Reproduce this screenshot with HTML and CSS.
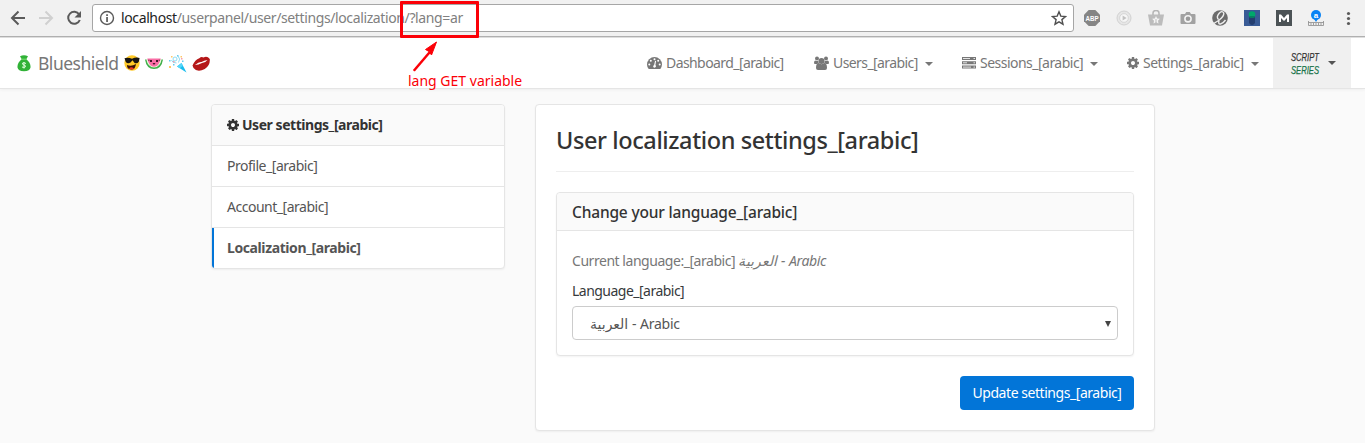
FILE: index.html
```html
<!DOCTYPE html>
<html lang="en">
<head>
<meta charset="utf-8">
<title>User localization settings</title>
<link rel="stylesheet" href="styles.css">
</head>
<body>
<svg class="defs" width="0" height="0">
  <symbol id="cog" viewBox="0 128 1536 1536"><path d="M1024 896q0-106-75-181t-181-75-181 75-75 181 75 181 181 75 181-75 75-181zm512-109v222q0 12-8 23t-20 13l-185 28q-19 54-39 91 35 50 107 138 10 12 10 25t-9 23q-27 37-99 108t-94 71q-12 0-26-9l-138-108q-44 23-91 38-16 136-29 186-7 28-36 28h-222q-14 0-24.500-8.500t-11.500-21.500l-28-184q-49-16-90-37l-141 107q-10 9-25 9-14 0-25-11-126-114-165-168-7-10-7-23 0-12 8-23 15-21 51-66.500t54-70.500q-27-50-41-99l-183-27q-13-2-21-12.500t-8-23.500v-222q0-12 8-23t19-13l186-28q14-46 39-92-40-57-107-138-10-12-10-24 0-10 9-23 26-36 98.500-107.500t94.500-71.500q13 0 26 10l138 107q44-23 91-38 16-136 29-186 7-28 36-28h222q14 0 24.500 8.500t11.500 21.500l28 184q49 16 90 37l142-107q9-9 24-9 13 0 25 10 129 119 165 170 7 8 7 22 0 12-8 23-15 21-51 66.500t-54 70.500q26 50 41 98l183 28q13 2 21 12.500t8 23.500z"/></symbol>
</svg>

<header class="browser">
  <svg class="browser-nav" width="92" height="36" viewBox="0 0 92 36" fill="none" stroke-width="2">
    <path d="M25 18H12.500M18.500 11.500L12 18l6.500 6.500" stroke="#5a5a5a"/>
    <path d="M39 18h12.500M45.500 11.500L52 18l-6.500 6.500" stroke="#d0d0d0"/>
    <path d="M79.200 14.500A6 6 0 1 0 79.800 20" stroke="#5a5a5a"/>
    <path d="M81 11v6.500h-6.500z" fill="#5a5a5a"/>
  </svg>
  <div class="address">
    <svg width="16" height="16" viewBox="0 0 16 16"><circle cx="8" cy="8" r="6.500" fill="none" stroke="#5a5a5a" stroke-width="1.400"/><path d="M7.200 4.200h1.700v1.700H7.200zM7.200 7h1.700v5H7.200z" fill="#5a5a5a"/></svg>
    <span class="url"><b>localhost</b>/userpanel/user/settings/localization/?lang=ar</span>
    <svg class="star" width="16" height="16" viewBox="0 0 16 16"><path d="M8 1.800l1.800 4.300 4.700.4-3.600 3.100 1.100 4.600L8 11.800l-4 2.400 1.100-4.600-3.600-3.100 4.700-.4z" fill="none" stroke="#505050" stroke-width="1.400"/></svg>
  </div>
  <div class="extensions">
    <svg class="loose" width="16" height="16" viewBox="0 0 16 16"><path d="M4.700 0h6.600L16 4.700v6.600L11.300 16H4.700L0 11.300V4.700z" fill="#858585"/><text x="1.500" y="10.900" class="abp" textLength="13" lengthAdjust="spacingAndGlyphs">ABP</text></svg>
    <svg width="16" height="16" viewBox="0 0 16 16"><circle cx="8" cy="8" r="7" fill="#e6e6e6" stroke="#d2d2d2"/><circle cx="8" cy="8" r="4.300" fill="#f6f6f6" stroke="#ccc" stroke-width=".7"/><path d="M6.600 5.500v5l4-2.500z" fill="#c2c2c2"/></svg>
    <svg width="16" height="16" viewBox="0 0 16 16"><path d="M0 4.500h16L14 15.500H2z" fill="#bcbcbc"/><path d="M5 5V3q0-2.500 3-2.500T11 3v2" fill="none" stroke="#b5b5b5" stroke-width="1.500"/><path d="M8 6l1.200 2.500 2.700.3-1.900 1.900.5 2.800L8 12.200l-2.500 1.300.5-2.800-1.900-1.900 2.700-.3z" fill="#f4f4f4"/><path d="M8 9v4" stroke="#bcbcbc"/></svg>
    <svg width="16" height="16" viewBox="0 0 16 16"><path d="M1.500 4H5l1.200-2h3.600L11 4h3.500q1 0 1 1v8q0 1-1 1h-13q-1 0-1-1V5q0-1 1-1z" fill="#a2a2a2"/><circle cx="8" cy="8.800" r="3.100" fill="#999" stroke="#f3f3f3" stroke-width="1.600"/></svg>
    <svg width="16" height="16" viewBox="0 0 16 16"><circle cx="8" cy="8" r="7.800" fill="#6c6c6c"/><path d="M6.500 9.500Q4 7 7 3.500T11.800 3Q12 6.500 7.500 9.700T1.500 13.500M7 10.500q-1 4 1.500 3.500t5-4" fill="none" stroke="#eee" stroke-width="1.400"/></svg>
    <svg width="16" height="16" viewBox="0 0 16 16"><path d="M0 0h16v16H0z" fill="#395b96"/><path d="M5 5h6v8q-3 4-6 0z" fill="#243e70"/><circle cx="8" cy="4.500" r="3.300" fill="#00a86b"/><path d="M5.500 6h5v2h-5z" fill="#087d62"/></svg>
    <svg width="16" height="16" viewBox="0 0 16 16"><path d="M0 0h16v16H0z" fill="#4c5356"/><path d="M3 12V4.500h2L8 8l3-3.500h2V12h-2V8l-3 3-3-3v4z" fill="#fff"/></svg>
    <svg class="loose" width="16" height="16" viewBox="0 0 16 16"><path d="M5.500 8h5L8 12z" fill="#0783f5"/><circle cx="8" cy="5" r="5" fill="#0783f5"/><text x="8" y="7.800" text-anchor="middle" class="ruler-a">a</text><path d="M.5 11v4.500h15V11M.5 12.500h15M3 13v2M5.500 13v2M8 13v2M10.500 13v2M13 13v2" fill="none" stroke="#8a8a8a" stroke-width=".8"/></svg>
    <svg width="16" height="16" viewBox="0 0 16 16" fill="#5a5a5a"><circle cx="8.500" cy="3.500" r="1.600"/><circle cx="8.500" cy="8.500" r="1.600"/><circle cx="8.500" cy="13.500" r="1.600"/></svg>
  </div>
</header>

<nav class="navbar">
  <div class="brand">
    <svg width="14" height="17" viewBox="0 0 14 17"><path d="M3 1.200Q7-.6 11 1.200L9.300 4.300Q14 8 13.500 12.500 13 16.200 7 16.200T.5 12.500Q0 8 4.700 4.300z" fill="#31b237"/><path d="M4 4.200h6" stroke="#7bdd71"/><path d="M9 8.500Q7 7.200 5.500 8.200 5 9.500 7 10T8.400 11.800Q7 13 5 12M7 7v6.500" fill="none" stroke="#e4ffe0"/></svg>
    <span class="brand-name">Blueshield</span>
    <svg width="16" height="16" viewBox="0 0 16 16"><circle cx="8" cy="8" r="7.700" fill="#ffc928"/><path d="M.5 3.200Q4 2 8 3.700 12 1.800 15.600 3l-.7 3.500q-1.800 2.700-4.300 1.500L8.500 5.300 6.500 7.600q-3 1.800-4.800-.9z" fill="#171411"/><path d="M3 10q4.500 1.800 9-1-.8 6-5 5.500T3 10z" fill="#391008"/><path d="M5 13.500q2-2.300 5 0-2 2-5 0z" fill="#ee3525"/></svg>
    <svg width="18" height="11" viewBox="0 0 18 11"><path d="M0 1.500h18Q16.500 11 9 11T0 1.500z" fill="#3fae49"/><path d="M1.300 1.300h15.400Q15 9.600 9 9.600T1.300 1.300z" fill="#eafbe0"/><path d="M2.300.5h13.400Q14 8.700 9 8.700T2.300.5z" fill="#fa6da5"/><path d="M5 2h2v2H5zM11 2h2v2h-2zM7.500 5h3l-1.500 2zM3.400 1.800h1v1h-1zM13.700 1.800h1v1h-1z" fill="#44152a"/></svg>
    <svg width="19" height="19" viewBox="0 0 19 19"><path d="M9 12.500L13.500 9l5 9.500z" fill="#18bdee"/><path d="M9 12.500L13.500 9l1.400 2.700-3 2.500z" fill="#55d6fa"/><g fill="none" stroke="#8edcf3"><circle cx="7" cy="5" r="2"/><path d="M8.500 9Q4 9 3.500 6M10.500 8.500Q13 5 10 2"/></g><g fill="#61cdf0"><path d="M1 6h1.500v1.500H1zM5 10h1.500v1.500H5zM9 1h1.500v1.500H9zM14 6.500h1.500V8H14z"/></g><path d="M1 12h2v2H1zM12.500 2h1.500v1.500h-1.500zM3 2h1.500v1.500H3z" fill="#ffc765"/><path d="M13 4h1.500v1.500H13zM5 7h1.500v1.500H5z" fill="#f49eaa"/></svg>
    <svg width="18" height="15" viewBox="0 0 18 15"><path d="M.5 9.500Q3 3.700 7.300 2.200 9.500.2 11.500 1.600 15-.5 17.800 3q.5 6.500-5 10Q5.500 17 1.500 12z" fill="#b51718"/><path d="M3 9Q7 5.600 9.500 6 12 4.300 15.500 4q-2 2.800-5.500 3Q6.500 9 3 9z" fill="#fff"/></svg>
  </div>
  <div class="menu">
    <a class="item"><svg width="15" height="12" viewBox="0 0 15 12"><path d="M1.700 12Q0 9.800 0 7.500a7.500 7.500 0 0 1 15 0Q15 9.800 13.300 12z" fill="#777"/><g fill="#fff"><circle cx="2.300" cy="7.400" r="1"/><circle cx="3.800" cy="3.800" r="1"/><circle cx="7.500" cy="2.200" r="1"/><circle cx="11.200" cy="3.800" r="1"/><circle cx="12.700" cy="7.400" r="1"/><path d="M8.100 3.800l1 .3-.7 3.900q1.100 1 .3 2.100-1.200 1-2.300.1-.9-1.400.7-2.200z"/></g></svg><span class="t-dash">Dashboard_[arabic]</span></a>
    <a class="item"><svg width="15" height="14" viewBox="0 0 15 14" fill="#777"><circle cx="3" cy="2.500" r="2"/><circle cx="12" cy="2.500" r="2"/><path d="M0 7q0-2.500 1.200-2.500 2 1 3.200.2-.2 1.300.4 2.300L2.800 8H1Q0 8 0 7zM15 7q0-2.500-1.200-2.500-2 1-3.200.2.200 1.300-.4 2.300l2 1H14q1 0 1-1z"/><circle cx="7.500" cy="5" r="3"/><path d="M2 12q0-5 2.800-5 2.700 2.300 5.400 0Q13 7 13 12q0 2-2 2H4q-2 0-2-2z"/></svg><span class="t-users">Users_[arabic]</span><i class="caret"></i></a>
    <a class="item"><svg width="14" height="12" viewBox="0 0 14 12"><path d="M0 0h14v3H0zM0 4.300h14v3H0zM0 8.600h14v3H0z" fill="#777"/><path d="M1 1.500h7M1 5.800h4M1 10.100h8M11.500 1.500h1.500M11.500 5.800h1.500M11.500 10.100h1.500" stroke="#fff" stroke-width=".8"/></svg><span class="t-sessions">Sessions_[arabic]</span><i class="caret"></i></a>
    <a class="item"><svg width="12" height="12" fill="#777"><use href="#cog"/></svg><span class="t-settings">Settings_[arabic]</span><i class="caret"></i></a>
    <a class="item account">
      <svg class="loose avatar" width="34" height="32" viewBox="0 0 34 32"><text x="2" y="14" fill="#333" stroke="#333" textLength="28" lengthAdjust="spacingAndGlyphs">SCRIPT</text><text x="2" y="27" fill="#167247" stroke="#167247" textLength="28" lengthAdjust="spacingAndGlyphs">SERIES</text></svg><i class="caret"></i></a>
  </div>
</nav>

<main class="page">
  <aside class="card sidebar">
    <div class="side-head"><svg width="12" height="12" fill="#333"><use href="#cog"/></svg><span>User settings_[arabic]</span></div>
    <a class="side-item">Profile_[arabic]</a>
    <a class="side-item">Account_[arabic]</a>
    <a class="side-item active">Localization_[arabic]</a>
  </aside>
  <section class="card content">
    <h1>User localization settings_[arabic]</h1>
    <div class="card panel">
      <h2>Change your language_[arabic]</h2>
      <div class="panel-body">
        <p class="current"><span>Current language:_[arabic]</span> <em>العربية - Arabic</em></p>
        <div class="label">Language_[arabic]</div>
        <div class="select"><span>العربية - Arabic</span><i class="arrow"></i></div>
      </div>
    </div>
    <button class="update">Update settings_[arabic]</button>
  </section>
</main>

<div class="note-box"></div>
<svg class="note-arrow" width="26" height="34" viewBox="0 0 26 34"><path d="M2.500 29L17 12" stroke="#fb0007" stroke-width="2.500" stroke-linecap="round"/><path d="M24.500 1L13.500 8.500l3.500 2 2.500 3.500z" fill="#fb0007" stroke="#fb0007"/></svg>
<div class="note-text">lang GET variable</div>
</body>
</html>
```
FILE: styles.css
```css
* { box-sizing: border-box; }
body {
  position: relative;
  margin: 0;
  height: 443px;
  overflow: hidden;
  background: #fafafa;
  color: #373a3c;
  font: 14px/20px "Noto Sans", "Open Sans", "DejaVu Sans", sans-serif;
}
svg { flex: none; display: block; }
span { white-space: nowrap; }
.defs { position: absolute; }
.loose { overflow: visible; }

.browser {
  display: flex;
  align-items: flex-start;
  height: 38px;
  background: #f1f1f1;
  border-bottom: 1px solid #e0e0e0;
  box-shadow: inset 0 -1px #b0b0b0;
}
.address {
  display: flex;
  align-items: center;
  width: 982px;
  height: 28px;
  margin-top: 4px;
  padding: 0 6px;
  background: #fff;
  border: 1px solid #a6a6a6;
  border-radius: 3px;
}
.url { margin-left: 6px; color: #808080; letter-spacing: -.38px; }
.url b { font-weight: 400; color: #222; }
.star { margin-left: auto; }
.extensions { display: flex; gap: 16px; padding: 10px 0 0 10px; }
.abp { font: bold 8px "Liberation Sans", sans-serif; fill: #fff; }
.ruler-a { font: bold 8px "Liberation Sans", sans-serif; fill: #fff; }

.navbar {
  display: flex;
  justify-content: space-between;
  height: 51px;
  padding: 0 14px 0 17px;
  background: #fff;
  border-bottom: 1px solid #e5e5e5;
  box-shadow: 0 1px 3px rgba(0, 0, 0, .05);
}
.brand { display: flex; align-items: center; gap: 5px; color: #777; }
.brand-name { margin: 0 1px 0 2px; font-size: 17.5px; letter-spacing: -.5px; width: 80px; }
.menu { display: grid; grid-template-columns: 167px 148px 165px 146px 78px; }
.item { display: flex; align-items: center; color: #777; }
.item span { margin-left: 4px; }
.caret {
  margin: 2px 0 0 7px;
  border: 4px solid transparent;
  border-top-color: currentColor;
  border-bottom: 0;
}
.account { padding-left: 16px; background: #f0f0f0; color: #555; }
.account .caret { margin: 0 0 0 5px; }
.avatar text { font: italic 11.5px "Liberation Sans", sans-serif; stroke-width: .25px; }
.t-dash, .t-users { letter-spacing: -.58px; }
.t-sessions { letter-spacing: -.52px; }
.t-settings { letter-spacing: -.48px; }

.page {
  display: grid;
  grid-template-columns: 294px 620px;
  gap: 30px;
  align-items: start;
  padding: 15px 0 0 211px;
}
.card {
  background: #fff;
  border: 1px solid #e5e5e5;
  border-radius: 4px;
  box-shadow: 0 1px 2px rgba(0, 0, 0, .05);
}
.sidebar { overflow: hidden; height: 165px; }
.side-head {
  display: flex;
  align-items: center;
  gap: 3px;
  height: 41px;
  padding-left: 15px;
  background: #fafafa;
  border-bottom: 1px solid #e5e5e5;
  color: #333;
  font-weight: 700;
  letter-spacing: -.46px;
}
.side-item {
  display: block;
  height: 41px;
  padding: 10px 15px;
  border-bottom: 1px solid #e5e5e5;
  color: #555;
  letter-spacing: -.48px;
}
.side-item.active {
  margin-left: -1px;
  padding-left: 13px;
  border-left: 3px solid #0275d8;
  border-bottom: 0;
  font-weight: 700;
  letter-spacing: -.4px;
}
.content { height: 327px; padding: 20px; }
h1 {
  margin: 0 0 20px;
  height: 47px;
  border-bottom: 1px solid #eee;
  color: #333;
  font-size: 23.5px;
  font-weight: 500;
  line-height: 30px;
  letter-spacing: -.4px;
}
h2 {
  margin: 0;
  height: 38px;
  padding: 0 15px;
  background: #fafafa;
  border-bottom: 1px solid #e5e5e5;
  border-radius: 4px 4px 0 0;
  color: #333;
  font-size: 15.5px;
  font-weight: 500;
  line-height: 39px;
  letter-spacing: -.18px;
}
.panel { height: 164px; }
.panel-body { padding: 20px 15px; }
.current { margin: 0 0 10px; color: #777; letter-spacing: -.46px; height: 20px; }
.current em { letter-spacing: -.38px; }
.label { height: 20px; margin-bottom: 5px; letter-spacing: -.52px; }
.select {
  display: flex;
  align-items: center;
  justify-content: space-between;
  height: 34px;
  padding: 1px 6px 0 17px;
  border: 1px solid #ccc;
  border-radius: 4px;
  color: #555;
  letter-spacing: -.25px;
}
.arrow { border: 3px solid transparent; border-top: 6px solid #444; border-bottom: 0; }
.update {
  display: block;
  width: 174px;
  height: 34px;
  margin: 20px 0 0 auto;
  padding: 0;
  background: #0275d8;
  border: 0;
  border-radius: 4px;
  color: #fff;
  font: inherit;
  letter-spacing: -.45px;
}

.note-box { position: absolute; left: 400px; top: 1px; width: 79px; height: 37px; border: 3px solid #fb0007; border-radius: 1px; }
.note-arrow { position: absolute; left: 412px; top: 41px; }
.note-text { position: absolute; left: 408px; top: 71px; color: #fb0007; white-space: nowrap; }
```
